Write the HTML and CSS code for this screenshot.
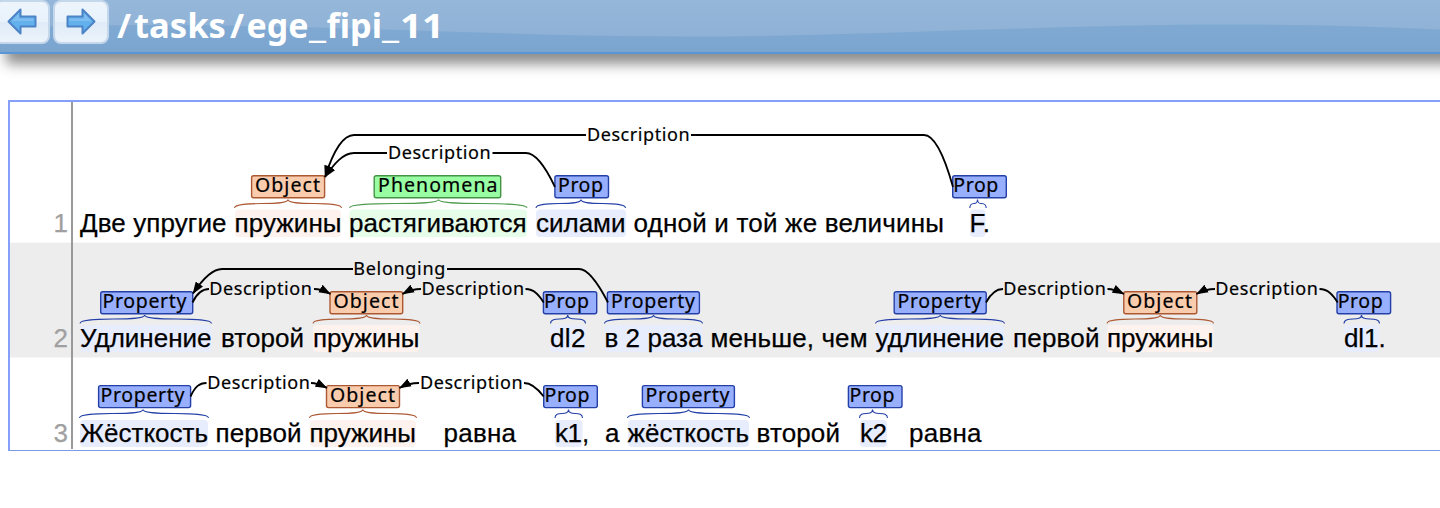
FILE: index.html
```html
<!DOCTYPE html>
<html lang="ru">
<head>
<meta charset="utf-8">
<title>/tasks/ege_fipi_11</title>
<link rel="stylesheet" href="styles.css">
</head>
<body>
<header class="header">
  <svg class="wave" viewBox="0 0 1440 52" preserveAspectRatio="none" aria-hidden="true">
    <defs><linearGradient id="sky" x1="0" y1="0" x2="0" y2="1"><stop offset="0" stop-color="#94b7da"/><stop offset="1" stop-color="#8eb1d5"/></linearGradient></defs>
    <path fill="url(#sky)" d="M0 0H1440V29.5C1370 26 1300 24.5 1230 24.5C1050 24.5 870 36.5 690 36.5C510 36.5 330 25 150 25C100 25 50 26 0 28Z"/>
  </svg>
  <button class="nav nav-prev" aria-label="Previous">
    <svg width="30" height="28" viewBox="0 0 30 28"><path class="arrow" d="M1.500 13.500L13.500 1.500V8.500H28.500V18.500H13.500V25.500Z"/><path class="shine" d="M4.500 13L12 5.500V10.500H26.500V13"/></svg>
  </button>
  <button class="nav nav-next" aria-label="Next">
    <svg width="30" height="28" viewBox="0 0 30 28"><path class="arrow" d="M28.500 13.500L16.500 1.500V8.500H1.500V18.500H16.500V25.500Z"/><path class="shine" d="M25.500 13L18 5.500V10.500H3.500V13"/></svg>
  </button>
  <h1 class="title"><svg width="340" height="52" viewBox="0 0 340 52"><text y="38"><tspan x="0">/</tspan><tspan x="17" textLength="92" lengthAdjust="spacingAndGlyphs">tasks</tspan><tspan x="113">/</tspan><tspan x="129.500" textLength="62" lengthAdjust="spacingAndGlyphs">ege</tspan><tspan x="192" textLength="17" lengthAdjust="spacingAndGlyphs">_</tspan><tspan x="209.500" textLength="55.500" lengthAdjust="spacingAndGlyphs">fipi</tspan><tspan x="265" textLength="17" lengthAdjust="spacingAndGlyphs">_</tspan><tspan x="283" textLength="44" lengthAdjust="spacingAndGlyphs">11</tspan></text></svg></h1>
</header>
<main class="document">
<svg class="canvas" width="1430" height="348" viewBox="10 102 1430 348">
  <defs>
    <marker id="head" viewBox="0 0 11 8" refX="10.500" refY="4" markerWidth="12" markerHeight="9" markerUnits="userSpaceOnUse" orient="auto"><path d="M0 0L11 4L0 8Z"/></marker>
  </defs>
  <rect class="stripe" x="10" y="242.700" width="1430" height="114.800"/>
  <path class="gutter" d="M72 102V449"/>

  <!-- highlights behind words -->
  <g class="obj-bg"><rect x="235" y="209.500" width="106" height="27.500" rx="4"/><rect x="313" y="325" width="106.500" height="27" rx="4"/><rect x="1107" y="325" width="106.500" height="27" rx="4"/><rect x="310" y="420" width="106" height="27" rx="4"/></g>
  <g class="phen-bg"><rect x="349.500" y="209.500" width="177.500" height="27.500" rx="4"/></g>
  <g class="prop-bg"><rect x="536" y="209.500" width="90" height="27.500" rx="4"/><rect x="970" y="209.500" width="15.500" height="27.500" rx="4"/><rect x="80" y="325" width="131.500" height="27" rx="4"/><rect x="550" y="325" width="35.500" height="27" rx="4"/><rect x="604.500" y="325" width="97.500" height="27" rx="4"/><rect x="875.500" y="325" width="128.500" height="27" rx="4"/><rect x="1344" y="325" width="35" height="27" rx="4"/><rect x="80" y="420" width="128" height="27" rx="4"/><rect x="555" y="420" width="27.500" height="27" rx="4"/><rect x="628" y="420" width="121" height="27" rx="4"/><rect x="860" y="420" width="27" height="27" rx="4"/></g>

  <!-- braces -->
  <g class="brace obj-line">
    <path d="M234.500 208C235 200 288 207 288 199.500C288 207 341 200 341.500 208"/>
    <path d="M313 323.500C313.500 315.500 366.500 322.500 366.500 315C366.500 322.500 419.500 315.500 420 323.500"/>
    <path d="M1107 323.500C1107.500 315.500 1160.300 322.500 1160.300 315C1160.300 322.500 1213 315.500 1213.500 323.500"/>
    <path d="M309.500 418C310 410 362.700 417 362.700 409.500C362.700 417 416 410 416.500 418"/>
  </g>
  <g class="brace phen-line"><path d="M349.500 208C350 200 438.500 207 438.500 199.500C438.500 207 526.500 200 527 208"/></g>
  <g class="brace prop-line">
    <path d="M536 208C536.500 200 581 207 581 199.500C581 207 625 200 625.500 208"/>
    <path d="M969.800 208C970 200 977.500 207 977.500 199.500C977.500 207 986 200 986.200 208"/>
    <path d="M80 323.500C80.500 315.500 144.700 322.500 144.700 315C144.700 322.500 211 315.500 211.500 323.500"/>
    <path d="M550.500 323.500C551 315.500 567.700 322.500 567.700 315C567.700 322.500 585 315.500 585.500 323.500"/>
    <path d="M604.500 323.500C605 315.500 653.500 322.500 653.500 315C653.500 322.500 702 315.500 702.500 323.500"/>
    <path d="M875.500 323.500C876 315.500 940.300 322.500 940.300 315C940.300 322.500 1004 315.500 1004.500 323.500"/>
    <path d="M1344 323.500C1344.500 315.500 1361.500 322.500 1361.500 315C1361.500 322.500 1379 315.500 1379.500 323.500"/>
    <path d="M79.500 418C80 410 143 417 143 409.500C143 417 208 410 208.500 418"/>
    <path d="M555 418C555.200 410 568.500 417 568.500 409.500C568.500 417 582.300 410 582.500 418"/>
    <path d="M627.500 418C628 410 688.500 417 688.500 409.500C688.500 417 749 410 749.500 418"/>
    <path d="M859.500 418C859.700 410 872.500 417 872.500 409.500C872.500 417 887.200 410 887.500 418"/>
  </g>

  <!-- label boxes -->
  <g class="box obj"><rect x="251.600" y="175.700" width="73" height="22" rx="2"/><rect x="330" y="291.700" width="72.700" height="22" rx="2"/><rect x="1123.800" y="291.700" width="73" height="22" rx="2"/><rect x="326.500" y="385.600" width="73" height="22" rx="2"/></g>
  <g class="box phen"><rect x="374.200" y="175.700" width="126.500" height="22" rx="2"/></g>
  <g class="box prop"><rect x="554.900" y="175.700" width="53.600" height="22" rx="2"/><rect x="952.700" y="175.700" width="53.600" height="22" rx="2"/><rect x="100.700" y="291.700" width="92" height="22" rx="2"/><rect x="543.400" y="291.700" width="53.300" height="22" rx="2"/><rect x="607.400" y="291.700" width="92" height="22" rx="2"/><rect x="894.200" y="291.700" width="92" height="22" rx="2"/><rect x="1337" y="291.700" width="53.600" height="22" rx="2"/><rect x="98.600" y="385.600" width="92" height="22" rx="2"/><rect x="543.700" y="385.600" width="53.600" height="22" rx="2"/><rect x="642.400" y="385.600" width="92" height="22" rx="2"/><rect x="848.400" y="385.600" width="53.600" height="22" rx="2"/></g>

  <!-- relation arcs -->
  <g class="arc">
    <path marker-end="url(#head)" d="M586 135H354C343 135 333 152 325 177"/>
    <path d="M691 135H924C934 135 944 155 953 187"/>
    <path marker-end="url(#head)" d="M387 153H354C343 153 334 164 325 177"/>
    <path d="M492.500 153H526C536 153 546 168 555 187"/>
    <path marker-end="url(#head)" d="M353 269H222C212 269 202 280 193 293.500"/>
    <path d="M447 269H579C589 269 599 285 608 302.500"/>
    <path d="M192.500 302.500C197 293 202 289 209 289"/>
    <path marker-end="url(#head)" d="M314 289C320 289 325 291 330.500 294"/>
    <path marker-end="url(#head)" d="M421 289C413 289 408 291 402.500 294"/>
    <path d="M525.500 289C534 289 539 295 543.700 302.500"/>
    <path d="M986 302.500C991 293 996 289 1003 289"/>
    <path marker-end="url(#head)" d="M1107.500 289C1113 289 1118 291 1124 294"/>
    <path marker-end="url(#head)" d="M1215 289C1207 289 1202 291 1196.500 294"/>
    <path d="M1319.500 289C1328 289 1333 295 1337.700 302.500"/>
    <path d="M190.500 396.500C195 387 199 383 206.500 383"/>
    <path marker-end="url(#head)" d="M311 383C317 383 321 385 327 388"/>
    <path marker-end="url(#head)" d="M419 383C411 383 405 385 399.500 388"/>
    <path d="M524 383C532 383 538 389 543.700 396.500"/>
  </g>
  <g class="label">
    <text x="587" y="140.700" textLength="102.500">Description</text><text x="388" y="158.700" textLength="102.500">Description</text>
    <text x="353.300" y="275" textLength="92">Belonging</text>
    <text x="209.300" y="295" textLength="102.500">Description</text><text x="421.500" y="295" textLength="102.500">Description</text><text x="1003.300" y="295" textLength="102.500">Description</text><text x="1215.300" y="295" textLength="102.500">Description</text>
    <text x="207.300" y="388.700" textLength="102.500">Description</text><text x="420" y="388.700" textLength="102.500">Description</text>
  </g>
  <g class="label span">
    <text x="255" y="192.300" textLength="65">Object</text><text x="378" y="192.300" textLength="119.500">Phenomena</text><text x="558" y="192.300" textLength="45">Prop</text><text x="953.300" y="192.300" textLength="45">Prop</text>
    <text x="102.500" y="308.400" textLength="84">Property</text><text x="333.500" y="308.400" textLength="65">Object</text><text x="544" y="308.400" textLength="45">Prop</text><text x="611" y="308.400" textLength="84">Property</text><text x="897.500" y="308.400" textLength="84">Property</text><text x="1127" y="308.400" textLength="65">Object</text><text x="1337.700" y="308.400" textLength="45">Prop</text>
    <text x="100.500" y="402.300" textLength="84">Property</text><text x="330" y="402.300" textLength="65">Object</text><text x="544.500" y="402.300" textLength="45">Prop</text><text x="645.500" y="402.300" textLength="84">Property</text><text x="849.500" y="402.300" textLength="45">Prop</text>
  </g>

  <g class="number"><text x="68" y="232">1</text><text x="68" y="347">2</text><text x="68" y="442">3</text></g>
  <g class="words">
    <text x="80" y="232" textLength="146.500">Две упругие</text><text x="234.500" y="232" textLength="107">пружины</text><text x="349" y="232" textLength="177.500">растягиваются</text><text x="536" y="232" textLength="89.500">силами</text><text x="633.500" y="232" textLength="310.500">одной и той же величины</text><text x="969.500" y="232" textLength="13" lengthAdjust="spacing">F</text><text x="982.700" y="232">.</text>
    <text x="80" y="347" textLength="131.500">Удлинение</text><text x="221" y="347" textLength="83">второй</text><text x="313" y="347" textLength="106.500">пружины</text><text x="550" y="347" textLength="35.500">dl2</text><text x="604.500" y="347" textLength="98">в 2 раза</text><text x="710.500" y="347" textLength="157">меньше, чем</text><text x="875.500" y="347" textLength="128.500">удлинение</text><text x="1013" y="347" textLength="86.500">первой</text><text x="1107" y="347" textLength="106.500">пружины</text><text x="1344" y="347" textLength="34.500">dl1</text><text x="1378.500" y="347">.</text>
    <text x="80" y="442" textLength="128">Жёсткость</text><text x="215.500" y="442" textLength="86">первой</text><text x="309.500" y="442" textLength="106.500">пружины</text><text x="443.500" y="442" textLength="72.500">равна</text><text x="555" y="442" textLength="27">k1</text><text x="582" y="442">,</text><text x="605" y="442">а</text><text x="627.500" y="442" textLength="121.500">жёсткость</text><text x="756.500" y="442" textLength="83.500">второй</text><text x="860" y="442" textLength="27">k2</text><text x="909" y="442" textLength="72.500">равна</text>
  </g>
</svg>
</main>
</body>
</html>
```
FILE: styles.css
```css
body { margin: 0; background: #fff; overflow: hidden; }
.header {
  position: relative;
  display: flex;
  align-items: flex-start;
  height: 52px;
  margin-right: -30px;
  border-bottom: 2px solid #5896d6;
  background: linear-gradient(#84add5, #7ba5cf);
  box-shadow: 6px 10px 12px #8e8e8e;
}
.wave { position: absolute; left: 0; top: 0; width: 1440px; height: 52px; }
.nav {
  position: relative;
  box-sizing: border-box;
  height: 44px;
  margin: 0;
  padding: 0;
  border: 2px solid #c5d8eb;
  border-radius: 8px;
  background: linear-gradient(#edf4fc 0, #e9f2fb 50%, #dfebf8 51%, #ecf3fa 100%);
  display: flex;
  align-items: center;
  justify-content: center;
}
.nav svg { margin-top: 0; }
.nav-prev { width: 56px; margin-left: -6px; }
.nav-next { width: 56px; margin-left: 3px; }
.arrow { fill: #62b0ec; stroke: #4c83c6; stroke-width: 2; stroke-linejoin: round; }
.shine { fill: #8dc5f1; opacity: .65; }
.title { position: relative; margin: 0 0 0 8px; height: 52px; font: bold 34px "Noto Sans", "Open Sans", sans-serif; }
.title svg { display: block; }
.title text { fill: #fff; }
.document {
  margin: 46px 0 0 8px;
  height: 348px;
  border: 2px solid #859ffb;
  border-right: 0;
  border-bottom-width: 1px;
  border-bottom-color: #7f9be8;
  overflow: hidden;
}
.canvas { display: block; }
.stripe { fill: #ededed; }
.gutter { stroke: #999; stroke-width: 2; }
.obj-bg { fill: #fdf2ed; }
.phen-bg { fill: #e6fde9; }
.prop-bg { fill: #e8edfe; }
.brace { fill: none; stroke-width: 1.1; }
.obj-line { stroke: #ac5832; }
.phen-line { stroke: #4b9b4b; }
.prop-line { stroke: #2440a8; }
.box { stroke-width: 1.4; }
.obj { fill: #f8ccad; stroke: #ac5832; }
.phen { fill: #99fda3; stroke: #459345; }
.prop { fill: #97affc; stroke: #2440a8; }
.arc { fill: none; stroke: #000; stroke-width: 1.8; }
#head path { fill: #000; stroke: none; }
.label { font: 18px "Noto Sans", "Open Sans", sans-serif; stroke: #000; stroke-width: .2; }
.span { font-size: 19.5px; }
.words, .number { font: 26px "Liberation Sans", Arial, sans-serif; }
.words { stroke: #000; stroke-width: .25; }
.number { fill: #a0a0a0; stroke: #a0a0a0; stroke-width: .25; text-anchor: end; }
```
